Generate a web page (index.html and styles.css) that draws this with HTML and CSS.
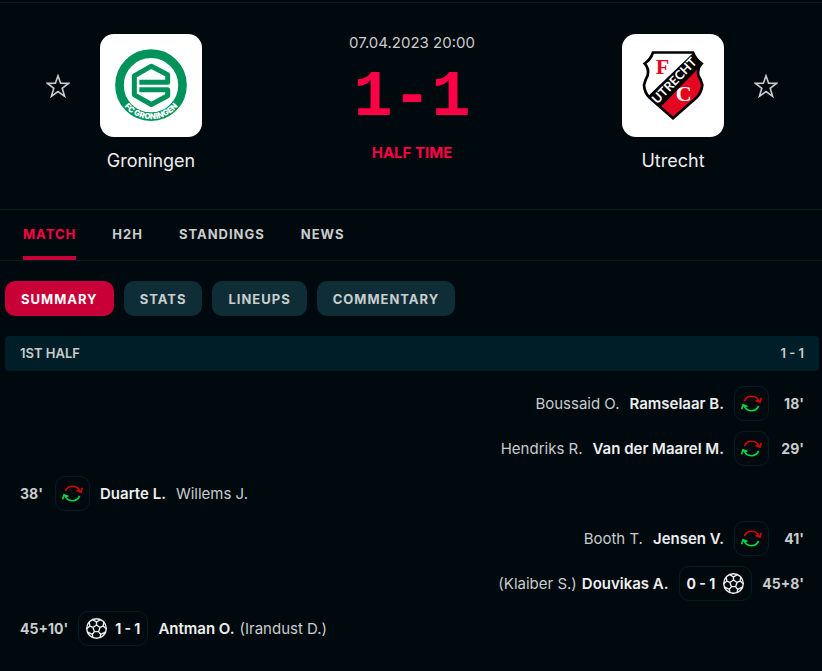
FILE: index.html
```html
<!DOCTYPE html>
<html lang="en">
<head>
<meta charset="utf-8">
<meta name="viewport" content="width=device-width, initial-scale=1">
<title>Groningen - Utrecht</title>
<link rel="stylesheet" href="styles.css">
</head>
<body>
<svg class="defs" aria-hidden="true">
  <symbol id="star" viewBox="0 0 24 24">
    <path d="M12 1.8 14.6 9.3 22.6 9.4 16.2 14.3 18.6 22.3 12 17.6 5.4 22.3 7.8 14.3 1.4 9.4 9.4 9.3Z" fill="none" stroke="currentColor" stroke-width="1.6"/>
  </symbol>
  <symbol id="swap" viewBox="0 0 62 62">
    <g fill="none" stroke-width="5">
      <path d="M10 24A23 23 0 0 1 53 25M60 14 56 27 43 22" stroke="#dc0000"/>
      <path d="M52 38A23 23 0 0 1 9 37M2 48 6 35 19 40" stroke="#00d84a"/>
    </g>
  </symbol>
  <symbol id="ball" viewBox="0 0 60 60">
    <g fill="none" stroke="currentColor" stroke-width="4">
      <circle cx="30" cy="30" r="28"/>
      <path d="M30 20 40 27 36 39H24L20 27ZM30 20V11M40 27 49 23M36 39 42 47M24 39 18 47M20 27 11 23M19 5 30 11 41 5M51 12 49 23 58 31M56 40 42 47 40 57M20 57 18 47 4 40M2 31 11 23 9 12"/>
    </g>
  </symbol>
</svg>

<main class="page">
  <header class="duel">
    <button class="favourite" type="button" aria-label="Add Groningen to favourites"><svg><use href="#star"/></svg></button>
    <div class="team">
      <a class="crest" href="#groningen" aria-label="Groningen">
        <svg viewBox="15 12 306 308">
          <circle cx="168" cy="165" r="94.5" fill="#fff" stroke="#00925b" stroke-width="26"/>
          <path d="M133 156H218V134L169 108 118 137V194L169 223 218 197V179H133" fill="none" stroke="#00925b" stroke-width="15" stroke-linejoin="round"/>
          <path id="ring" d="M66 165A102 102 0 0 0 270 165" fill="none"/>
          <text class="ring-text"><textPath href="#ring" startOffset="50%">FC GRONINGEN</textPath></text>
        </svg>
      </a>
      <a class="team-name" href="#groningen">Groningen</a>
    </div>
    <div class="result">
      <time class="date" datetime="2023-04-07T20:00">07.04.2023 20:00</time>
      <div class="score">1-1</div>
      <div class="status">HALF TIME</div>
    </div>
    <div class="team">
      <a class="crest" href="#utrecht" aria-label="Utrecht">
        <svg viewBox="15 12 306 308">
          <clipPath id="shield"><path d="M108 67H228Q236 88 254 100 240 115 244 136 252 148 256 164 254 187 238 203L168 264 98 203Q82 187 81 164 85 148 92 136 97 115 83 100 101 88 108 67Z"/></clipPath>
          <g clip-path="url(#shield)">
            <path d="M70 50H270V280H70Z" fill="#fff"/>
            <path d="M128 226 246 108H280V290H128Z" fill="#e40521"/>
            <path d="M92 199 236 61 268 90 126 236Z" fill="#000"/>
          </g>
          <path d="M108 67H228Q236 88 254 100 240 115 244 136 252 148 256 164 254 187 238 203L168 264 98 203Q82 187 81 164 85 148 92 136 97 115 83 100 101 88 108 67Z" fill="none" stroke="#000" stroke-width="8"/>
          <text class="band-text" transform="translate(121 223) rotate(-46)">UTRECHT</text>
          <text class="letter letter-f" x="116" y="131">F</text>
          <text class="letter letter-c" x="176" y="214">C</text>
        </svg>
      </a>
      <a class="team-name" href="#utrecht">Utrecht</a>
    </div>
    <button class="favourite" type="button" aria-label="Add Utrecht to favourites"><svg><use href="#star"/></svg></button>
  </header>

  <nav class="tabs">
    <a class="tab active" href="#match">MATCH</a>
    <a class="tab" href="#h2h">H2H</a>
    <a class="tab" href="#standings">STANDINGS</a>
    <a class="tab" href="#news">NEWS</a>
  </nav>

  <nav class="pills">
    <button class="pill active" type="button">SUMMARY</button>
    <button class="pill" type="button">STATS</button>
    <button class="pill" type="button">LINEUPS</button>
    <button class="pill" type="button">COMMENTARY</button>
  </nav>

  <section class="period">
    <h2 class="period-head"><span>1ST HALF</span><span>1 - 1</span></h2>
    <ul class="events">
      <li class="event away">
        <span class="minute">18'</span>
        <span class="badge"><svg><use href="#swap"/></svg></span>
        <span class="players"><a class="player" href="#p1">Ramselaar B.</a><a class="second" href="#p2">Boussaid O.</a></span>
      </li>
      <li class="event away">
        <span class="minute">29'</span>
        <span class="badge"><svg><use href="#swap"/></svg></span>
        <span class="players"><a class="player" href="#p3">Van der Maarel M.</a><a class="second" href="#p4">Hendriks R.</a></span>
      </li>
      <li class="event">
        <span class="minute">38'</span>
        <span class="badge"><svg><use href="#swap"/></svg></span>
        <span class="players"><a class="player" href="#p5">Duarte L.</a><a class="second" href="#p6">Willems J.</a></span>
      </li>
      <li class="event away">
        <span class="minute">41'</span>
        <span class="badge"><svg><use href="#swap"/></svg></span>
        <span class="players"><a class="player" href="#p7">Jensen V.</a><a class="second" href="#p8">Booth T.</a></span>
      </li>
      <li class="event away">
        <span class="minute">45+8'</span>
        <span class="badge goal"><svg><use href="#ball"/></svg><span>0 - 1</span></span>
        <span class="players assist"><a class="player" href="#p9">Douvikas A.</a><a class="second" href="#p10">(Klaiber S.)</a></span>
      </li>
      <li class="event">
        <span class="minute">45+10'</span>
        <span class="badge goal"><svg><use href="#ball"/></svg><span>1 - 1</span></span>
        <span class="players assist"><a class="player" href="#p11">Antman O.</a><a class="second" href="#p12">(Irandust D.)</a></span>
      </li>
    </ul>
  </section>
</main>
</body>
</html>
```
FILE: styles.css
```css
* {
  box-sizing: border-box;
}

body {
  margin: 0;
  background: #00090e;
  color: #c8cdcd;
  font: 15px/18px Inter, "Liberation Sans", sans-serif;
}

a {
  color: inherit;
  text-decoration: none;
}

button {
  border: 0;
  background: none;
  color: inherit;
  font: inherit;
  cursor: pointer;
}

.defs {
  display: none;
}

.page {
  margin-top: 2px;
  border-top: 1px solid #001e28;
}

.duel {
  display: flex;
  align-items: flex-start;
  padding: 31px 44px 36px 46px;
}

.favourite {
  margin-top: 40px;
  padding: 0;
  height: 24px;
}

.favourite svg {
  display: block;
  width: 24px;
  height: 24px;
}

.team {
  display: flex;
  flex-direction: column;
  align-items: center;
  gap: 12px;
  margin: 0 30px;
}

.crest {
  border-radius: 14px;
  background: #fff;
  overflow: hidden;
}

.crest svg {
  display: block;
  width: 102px;
  height: 103px;
}

.team-name {
  color: #eee;
  font-size: 18px;
  line-height: 24px;
}

.ring-text {
  fill: #fff;
  font: 900 24px Inter, sans-serif;
  text-anchor: middle;
}

.band-text {
  fill: #fff;
  font: 700 38px Lato, sans-serif;
}

.letter {
  font: 700 66px "Liberation Serif", serif;
}

.letter-f {
  fill: #e40521;
}

.letter-c {
  fill: #fff;
}

.result {
  flex: 1;
  text-align: center;
}

.date {
  display: block;
}

.score {
  color: #ff0046;
  font: 700 65px/92px "Liberation Mono", monospace;
}

.status {
  color: #ff0046;
  font-weight: 700;
}

.tabs {
  display: flex;
  gap: 36px;
  padding: 0 23px;
  border: solid #001e28;
  border-width: 1px 0;
}

.tab {
  padding: 15px 0 13px;
  border-bottom: 4px solid transparent;
  border-radius: 2px 2px 0 0;
  font-weight: 700;
  font-size: 13px;
  letter-spacing: 1px;
}

.tab.active {
  border-color: #c80037;
  color: #ff0046;
}

.pills {
  display: flex;
  gap: 10px;
  padding: 20px 5px;
}

.pill {
  height: 35px;
  padding: 0 16px;
  border-radius: 10px;
  background: #0f2d37;
  font-weight: 700;
  font-size: 13px;
  letter-spacing: 1px;
}

.pill.active {
  background: #c80037;
  color: #fff;
}

.period {
  padding: 0 3px 0 5px;
}

.period-head {
  display: flex;
  justify-content: space-between;
  margin: 0;
  padding: 0 15px;
  border-radius: 4px;
  background: #001e28;
  font-size: 13px;
  font-weight: 600;
  line-height: 35px;
}

.events {
  display: flex;
  flex-direction: column;
  gap: 10px;
  margin: 0;
  padding: 15px;
  list-style: none;
}

.event {
  display: flex;
  align-items: center;
  gap: 10px;
}

.away,
.away .players,
.away .badge {
  flex-direction: row-reverse;
}

.minute {
  min-width: 25px;
  font-weight: 700;
  font-size: 14px;
}

.away .minute {
  text-align: right;
}

.badge {
  display: flex;
  align-items: center;
  justify-content: center;
  gap: 8px;
  min-width: 35px;
  height: 35px;
  border: 1px solid #001e28;
  border-radius: 10px;
}

.badge svg {
  width: 21px;
  height: 21px;
}

.goal {
  padding: 0 7px;
  color: #eee;
  font-weight: 700;
  font-size: 14px;
}

.players {
  display: flex;
  gap: 10px;
}

.assist {
  gap: 5px;
}

.player {
  color: #eee;
  font-weight: 600;
}
```
